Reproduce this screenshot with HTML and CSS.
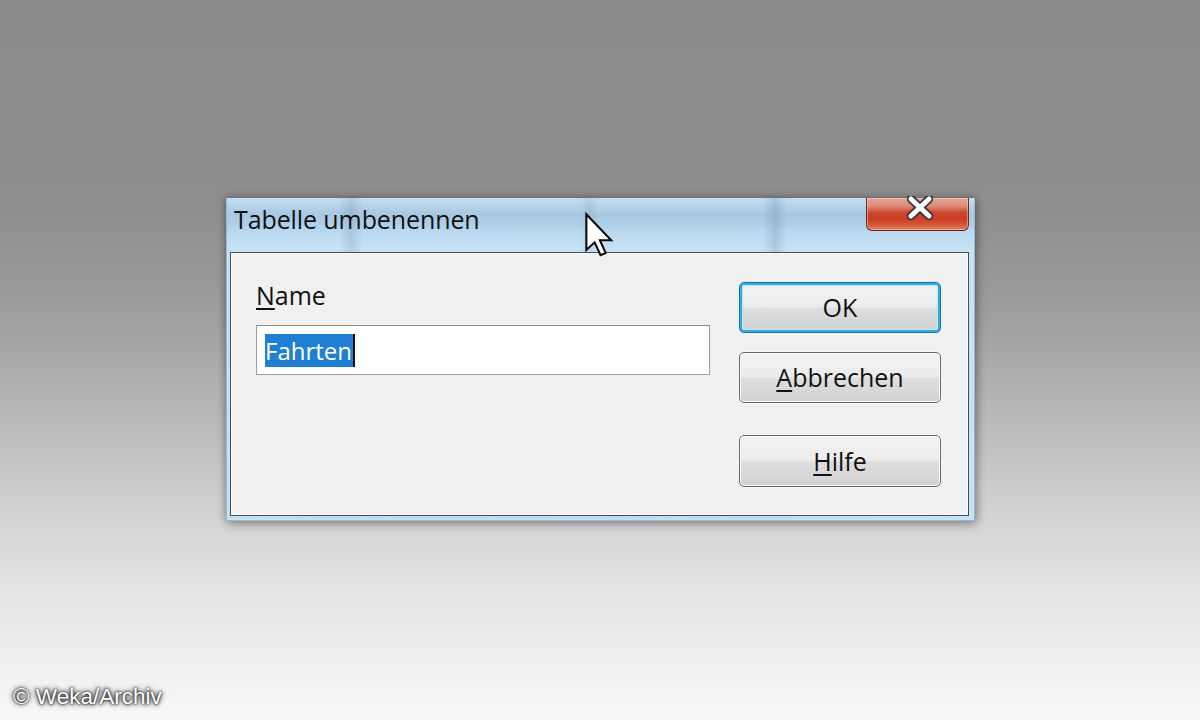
FILE: index.html
```html
<!DOCTYPE html>
<html lang="de">
<head>
<meta charset="utf-8">
<title>Tabelle umbenennen</title>
<link rel="stylesheet" href="styles.css">
</head>
<body>
<div class="desktop">
  <div class="window">
    <div class="titlebar">
      <span class="title">Tabelle umbenennen</span>
      <div class="close">
        <svg class="close-x" width="30" height="26" viewBox="0 0 30 26">
          <path d="M6 3 L24 20 M24 3 L6 20" stroke="#33343f" stroke-width="8.5" stroke-linecap="round" fill="none"/>
          <path d="M6 3 L24 20 M24 3 L6 20" stroke="#ffffff" stroke-width="5" stroke-linecap="round" fill="none"/>
        </svg>
      </div>
    </div>
    <div class="pane">
      <div class="form">
        <div class="label"><u>N</u>ame</div>
        <div class="input"><span class="sel">Fahrten</span></div>
      </div>
      <div class="buttons">
        <div class="btn btn-default">OK</div>
        <div class="btn btn-cancel"><u>A</u>bbrechen</div>
        <div class="btn btn-help"><u>H</u>ilfe</div>
      </div>
    </div>
  </div>
</div>
<svg class="cursor" width="30" height="46" viewBox="-1 -1 13 20">
  <path d="M0 0 L0 15.5 L3.6 12.2 L6.2 17.8 L8.4 16.8 L5.9 11.3 L10.8 11.3 Z" fill="#ffffff" stroke="#0a0a0a" stroke-width="0.9" stroke-linejoin="miter"/>
</svg>
<div class="watermark">© Weka/Archiv</div>
</body>
</html>
```

FILE: styles.css
```css
html, body {
  margin: 0;
  padding: 0;
}
body {
  width: 1200px;
  height: 720px;
  overflow: hidden;
  position: relative;
  font-family: "Open Sans", "Noto Sans", sans-serif;
  background: linear-gradient(to bottom,
    #8b8b8b 0px,
    #8e8e8e 200px,
    #9b9b9b 300px,
    #b4b4b4 400px,
    #cfcfcf 500px,
    #e6e6e6 600px,
    #f8f8f8 720px);
}
.desktop {
  padding-top: 198px;
  padding-left: 226px;
}
.window {
  width: 749px;
  box-sizing: border-box;
  padding: 0 5px 4px 3px;
  background: linear-gradient(to right, #c4e0f3, #bfdcf2 50%, #c6e2f5);
  border: 1px solid #9bb8cf;
  border-top: none;
  box-shadow: 0 0 8px rgba(0,0,0,0.35), 2px 4px 10px rgba(0,0,0,0.2);
}
.titlebar {
  height: 54px;
  display: flex;
  justify-content: space-between;
  align-items: flex-start;
  margin: 0 -5px 0 -3px;
  padding: 0 5px 0 7px;
  background:
    linear-gradient(to right,
      transparent 112px, rgba(70,100,130,0.16) 124px, transparent 136px,
      transparent 352px, rgba(70,100,130,0.10) 362px, transparent 372px,
      transparent 536px, rgba(70,100,130,0.20) 548px, transparent 560px),
    linear-gradient(to bottom,
      rgba(255,255,255,0) 0px,
      rgba(60,100,140,0.14) 16px,
      rgba(60,100,140,0.08) 24px,
      rgba(255,255,255,0) 34px,
      rgba(255,255,255,0.15) 54px),
    linear-gradient(to bottom, #c3def2, #b6d6ee 45%, #c0def4);
}
.title {
  margin-top: 6px;
  font-size: 25px;
  line-height: 30px;
  color: #101010;
  letter-spacing: -0.1px;
}
.close {
  width: 103px;
  height: 33px;
  box-sizing: border-box;
  border: 1px solid #6b2a1e;
  border-top: none;
  border-radius: 0 0 6px 6px;
  background: linear-gradient(to bottom, #e7a595 0%, #dd8d7b 25%, #cc4a30 45%, #c93c22 65%, #d65a3e 85%, #e2846a 100%);
  box-shadow: inset 0 0 0 1px rgba(255,220,210,0.45);
  display: flex;
  justify-content: center;
  align-items: flex-start;
}
.close-x {
  display: block;
  margin-top: -2px;
  margin-left: 5px;
}
.pane {
  height: 264px;
  box-sizing: border-box;
  border: 1px solid #3e4e5e;
  box-shadow: inset 0 0 0 1px #ffffff;
  background: #f0f0f0;
  display: flex;
  padding: 27px 27px 0 25px;
}
.form {
  flex: 1;
}
.label {
  font-size: 25px;
  line-height: 30px;
  color: #111;
}
u {
  text-decoration: underline;
  text-decoration-thickness: 2px;
  text-underline-offset: 3px;
}
.input {
  margin-top: 15px;
  height: 50px;
  box-sizing: border-box;
  border: 1px solid #9e9e9e;
  border-top-color: #8c8c8c;
  background: #ffffff;
  display: flex;
  align-items: center;
  padding-left: 8px;
}
.sel {
  display: inline-block;
  height: 33px;
  line-height: 33px;
  font-size: 24px;
  color: #ffffff;
  background: #1f80d3;
  padding: 0 1px 0 0;
  border-right: 2px solid #111;
}
.buttons {
  width: 202px;
  margin-left: 29px;
  padding-top: 2px;
  display: flex;
  flex-direction: column;
}
.btn {
  height: 51px;
  box-sizing: border-box;
  border: 1px solid #666666;
  border-radius: 5px;
  background: linear-gradient(to bottom, #f3f3f3 0%, #ececec 48%, #dedede 52%, #d2d2d2 100%);
  box-shadow: inset 0 0 0 1px #fbfbfb, 0 0 0 1px rgba(255,255,255,0.5);
  font-size: 25px;
  line-height: 49px;
  text-align: center;
  color: #111;
}
.btn-default {
  border: 1px solid #1c6f9e;
  box-shadow: inset 0 0 0 2px #2fade6, inset 0 0 0 3px #bfe3f5;
}
.btn-cancel {
  margin-top: 19px;
}
.btn-help {
  margin-top: 32px;
  height: 52px;
  line-height: 50px;
}
.cursor {
  position: absolute;
  left: 584px;
  top: 212px;
}
.watermark {
  position: absolute;
  left: 13px;
  top: 684px;
  font-family: "Liberation Sans", Arial, sans-serif;
  font-size: 22.5px;
  line-height: 26px;
  color: #ffffff;
  text-shadow: 0 0 2px #000, 0 0 4px #222, 0 0 6px rgba(0,0,0,0.6);
}
```
